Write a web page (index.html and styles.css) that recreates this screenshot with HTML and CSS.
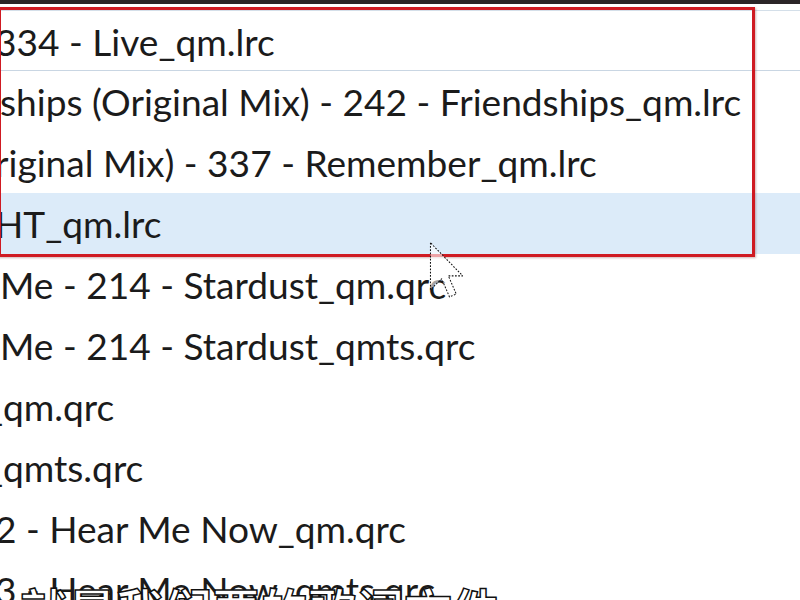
FILE: index.html
```html
<!DOCTYPE html>
<html>
<head>
<meta charset="utf-8">
<link rel="stylesheet" href="styles.css">
</head>
<body>
<div class="screen">
  <div class="topbar"></div>
  <div class="list">
    <div class="row row-first"><span class="name cut">334 - Live_qm.lrc</span></div>
    <div class="row"><span class="name">ships (Original Mix) - 242 - Friendships_qm.lrc</span></div>
    <div class="row"><span class="name cut">riginal Mix) - 337 - Remember_qm.lrc</span></div>
    <div class="row row-selected"><span class="name cut">HT_qm.lrc</span></div>
    <div class="row"><span class="name">Me - 214 - Stardust_qm.qrc</span></div>
    <div class="row"><span class="name">Me - 214 - Stardust_qmts.qrc</span></div>
    <div class="row"><span class="name cut-more">_qm.qrc</span></div>
    <div class="row"><span class="name cut-more">_qmts.qrc</span></div>
    <div class="row"><span class="name cut">2 - Hear Me Now_qm.qrc</span></div>
    <div class="row"><span class="name cut">3 - Hear Me Now_qmts.qrc</span></div>
  </div>
  <div class="highlight-box"></div>
  <svg class="cursor" width="34" height="58" viewBox="0 0 11.6 19.6">
    <path d="M0.5 0.5 L0.5 16.5 L4.3 12.8 L7 19 L9.3 18 L6.6 11.8 L11.5 11.8 Z" fill="#fff" fill-opacity="0.6" stroke="#111" stroke-width="0.35" stroke-dasharray="0.6 0.5" stroke-linejoin="round"/>
  </svg>
  <div class="subtitle">就是我们要的歌词文件</div>
</div>
</body>
</html>
```

FILE: styles.css
```css
html, body {
  margin: 0;
  padding: 0;
  background: #ffffff;
}

.screen {
  position: relative;
  width: 800px;
  height: 600px;
  overflow: hidden;
  background: #ffffff;
  font-family: "Lato", "Open Sans", sans-serif;
}

.topbar {
  height: 4px;
  background: #2b2527;
}

.list {
  display: flex;
  flex-direction: column;
  padding-top: 6px;
}

.row {
  height: 61px;
  line-height: 63px;
  font-size: 36px;
  color: #1b1b1b;
  white-space: nowrap;
  overflow: hidden;
  box-sizing: border-box;
}

.row-first {
  border-top: 1px solid #d4dfe9;
  border-bottom: 1px solid #c9d6e3;
}

.row-selected {
  background: #dcebf9;
}

.name {
  display: inline-block;
  transform: scaleX(1.03);
  transform-origin: left center;
}

.cut {
  margin-left: -5px;
}

.cut-more {
  margin-left: -14px;
}

.highlight-box {
  position: absolute;
  left: -2px;
  top: 7px;
  width: 751px;
  height: 244px;
  border: 3px solid #cf1a22;
  box-shadow: 1px 1px 2px rgba(120, 40, 40, 0.35);
}

.cursor {
  position: absolute;
  left: 429px;
  top: 241px;
}

.subtitle {
  position: absolute;
  left: 20px;
  top: 578px;
  font-family: "Noto Sans CJK SC", sans-serif;
  font-size: 48px;
  font-weight: 700;
  line-height: 60px;
  color: #ffffff;
  -webkit-text-stroke: 1.5px #111;
  white-space: nowrap;
}
```
